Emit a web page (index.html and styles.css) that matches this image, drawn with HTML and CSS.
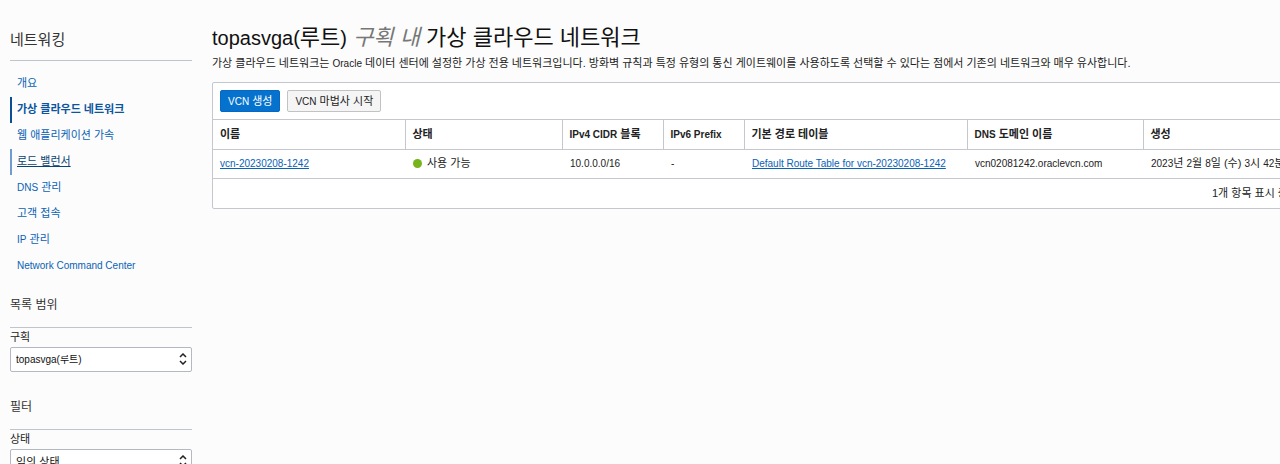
FILE: index.html
```html
<!DOCTYPE html>
<html lang="ko">
<head>
    <meta charset="UTF-8">
    <meta name="viewport" content="width=device-width, initial-scale=1.0">
    <title>가상 클라우드 네트워크</title>
    <link rel="stylesheet" href="styles.css">
</head>
<body>
    <div class="layout">
        <aside class="sidebar">
            <h2 class="sidebar-title">네트워킹</h2>
            <nav>
                <ul class="nav-list">
                    <li><a class="nav-link" href="#">개요</a></li>
                    <li><a class="nav-link active" href="#">가상 클라우드 네트워크</a></li>
                    <li><a class="nav-link" href="#">웹 애플리케이션 가속</a></li>
                    <li><a class="nav-link hovered" href="#">로드 밸런서</a></li>
                    <li><a class="nav-link" href="#"><span class="latin">DNS</span> 관리</a></li>
                    <li><a class="nav-link" href="#">고객 접속</a></li>
                    <li><a class="nav-link" href="#"><span class="latin">IP</span> 관리</a></li>
                    <li><a class="nav-link" href="#"><span class="latin">Network Command Center</span></a></li>
                </ul>
            </nav>

            <section class="filter-group">
                <h3 class="filter-title">목록 범위</h3>
                <label for="compartment">구획</label>
                <div class="select-wrap">
                    <select id="compartment" class="latin">
                        <option>topasvga(루트)</option>
                    </select>
                    <svg class="select-arrows" viewBox="0 0 8 12" aria-hidden="true">
                        <path d="M1 4 L4 1 L7 4 M1 8 L4 11 L7 8"/>
                    </svg>
                </div>
            </section>

            <section class="filter-group">
                <h3 class="filter-title">필터</h3>
                <label for="state">상태</label>
                <div class="select-wrap">
                    <select id="state">
                        <option>임의 상태</option>
                    </select>
                    <svg class="select-arrows" viewBox="0 0 8 12" aria-hidden="true">
                        <path d="M1 4 L4 1 L7 4 M1 8 L4 11 L7 8"/>
                    </svg>
                </div>
            </section>
        </aside>

        <main class="content">
            <h1><span class="compartment-name">topasvga(</span>루트<span class="compartment-name">)</span> <em>구획 내</em> 가상 클라우드 네트워크</h1>
            <p class="description">가상 클라우드 네트워크는 <span class="latin">Oracle</span> 데이터 센터에 설정한 가상 전용 네트워크입니다. 방화벽 규칙과 특정 유형의 통신 게이트웨이를 사용하도록 선택할 수 있다는 점에서 기존의 네트워크와 매우 유사합니다.</p>

            <div class="panel">
                <div class="toolbar">
                    <button type="button" class="btn btn-primary"><span class="latin">VCN</span> 생성</button>
                    <button type="button" class="btn"><span class="latin">VCN</span> 마법사 시작</button>
                </div>
                <table>
                    <colgroup>
                        <col class="col-name">
                        <col class="col-state">
                        <col class="col-ipv4">
                        <col class="col-ipv6">
                        <col class="col-route">
                        <col class="col-dns">
                        <col>
                    </colgroup>
                    <thead>
                        <tr>
                            <th>이름</th>
                            <th>상태</th>
                            <th><span class="latin">IPv4 CIDR</span> 블록</th>
                            <th><span class="latin">IPv6 Prefix</span></th>
                            <th>기본 경로 테이블</th>
                            <th><span class="latin">DNS</span> 도메인 이름</th>
                            <th>생성</th>
                        </tr>
                    </thead>
                    <tbody>
                        <tr>
                            <td><a class="latin" href="#">vcn-20230208-1242</a></td>
                            <td><span class="status">사용 가능</span></td>
                            <td><span class="latin">10.0.0.0/16</span></td>
                            <td><span class="latin">-</span></td>
                            <td><a class="latin" href="#">Default Route Table for vcn-20230208-1242</a></td>
                            <td><span class="latin">vcn02081242.oraclevcn.com</span></td>
                            <td><span class="latin">2023</span>년 <span class="latin">2</span>월 <span class="latin">8</span>일 (수) <span class="latin">3</span>시 <span class="latin">42</span>분</td>
                        </tr>
                    </tbody>
                </table>
                <div class="panel-footer">1개 항목 표시 중</div>
            </div>
        </main>
    </div>
</body>
</html>
```
FILE: styles.css
```css
* {
    box-sizing: border-box;
}
body {
    margin: 0;
    background: #fcfcfc;
    color: #222;
    font-family: "Liberation Sans", Arial, "Noto Sans CJK KR", sans-serif;
    font-size: 11px;
    line-height: 16px;
    overflow: hidden;
}
h1, h2, h3, p, ul {
    margin: 0;
    padding: 0;
    font-weight: normal;
}
a {
    color: #0a62b5;
}
.latin {
    font-size: 10px;
    line-height: 1;
}
.layout {
    display: flex;
    gap: 20px;
    padding: 24px 0 0 10px;
}

/* Sidebar */
.sidebar {
    flex: 0 0 182px;
}
.sidebar-title {
    padding: 4px 0 8px;
    border-bottom: 1px solid #c0c4cb;
    font-size: 15px;
    line-height: 24px;
    color: #333;
}
.nav-list {
    padding-top: 10px;
    list-style: none;
}
.nav-link {
    display: block;
    padding: 4px 0 6px 5px;
    border-left: 2px solid transparent;
    text-decoration: none;
}
.nav-link.active {
    border-left-color: #0a4f96;
    color: #0a559e;
    font-weight: bold;
}
.nav-link.hovered {
    border-left-color: #6f9bd0;
    color: #0a4373;
    text-decoration: underline;
}
.filter-group {
    padding-top: 16px;
}
.filter-group + .filter-group {
    padding-top: 25px;
}
.filter-title {
    margin-bottom: 1px;
    padding-bottom: 12px;
    border-bottom: 1px solid #c0c4cb;
    font-size: 12px;
    line-height: 20px;
    color: #333;
}
label {
    display: block;
}
.select-wrap {
    position: relative;
    margin-top: 2px;
}
select {
    display: block;
    width: 100%;
    height: 25px;
    padding: 0 20px 0 5px;
    border: 1px solid #b4b8c0;
    border-radius: 2px;
    background: #fff;
    color: #111;
    font-family: inherit;
    font-size: 11px;
    appearance: none;
}
.select-arrows {
    position: absolute;
    top: 6px;
    right: 5px;
    width: 8px;
    height: 12px;
    fill: none;
    stroke: #222;
    stroke-width: 1.5;
    pointer-events: none;
}

/* Main content */
.content {
    flex: 1;
    min-width: 0;
}
h1 {
    font-size: 22px;
    line-height: 28px;
    color: #111;
    white-space: nowrap;
}
h1 em {
    color: #777;
}
.compartment-name {
    font-size: 20px;
    line-height: 1;
}
.description {
    margin: 3px 0 11px;
    white-space: nowrap;
}
/* the list is wider than the window and runs off its right edge */
.panel {
    margin-right: -80px;
    border: 1px solid #c4c8ce;
    border-radius: 2px;
    background: #fff;
}
.toolbar {
    display: flex;
    gap: 7px;
    padding: 7px;
}
.btn {
    height: 22px;
    padding: 0 7px;
    border: 1px solid #c2c2c2;
    border-radius: 2px;
    background: #f5f5f5;
    color: #222;
    font: inherit;
    cursor: pointer;
}
.btn-primary {
    border-color: #0468c4;
    background: #0572ce;
    color: #fff;
}
table {
    width: 100%;
    border-collapse: collapse;
    table-layout: fixed;
}
th, td {
    height: 30px;
    padding: 0 7px 2px;
    border-top: 1px solid #c4c8ce;
    border-bottom: 1px solid #c4c8ce;
    text-align: left;
    white-space: nowrap;
}
td {
    height: 29px;
}
th + th {
    border-left: 1px solid #c4c8ce;
}
td + td {
    padding-left: 8px;
}
.col-name {
    width: 192px;
}
.col-state {
    width: 157px;
}
.col-ipv4 {
    width: 101px;
}
.col-ipv6 {
    width: 81px;
}
.col-route {
    width: 223px;
}
.col-dns {
    width: 176px;
}
.status {
    display: flex;
    align-items: center;
    gap: 5px;
}
.status::before {
    content: "";
    width: 9px;
    height: 9px;
    border-radius: 50%;
    background: #76b41b;
}
.panel-footer {
    padding: 6px 71px 7px 0;
    text-align: right;
}
```
